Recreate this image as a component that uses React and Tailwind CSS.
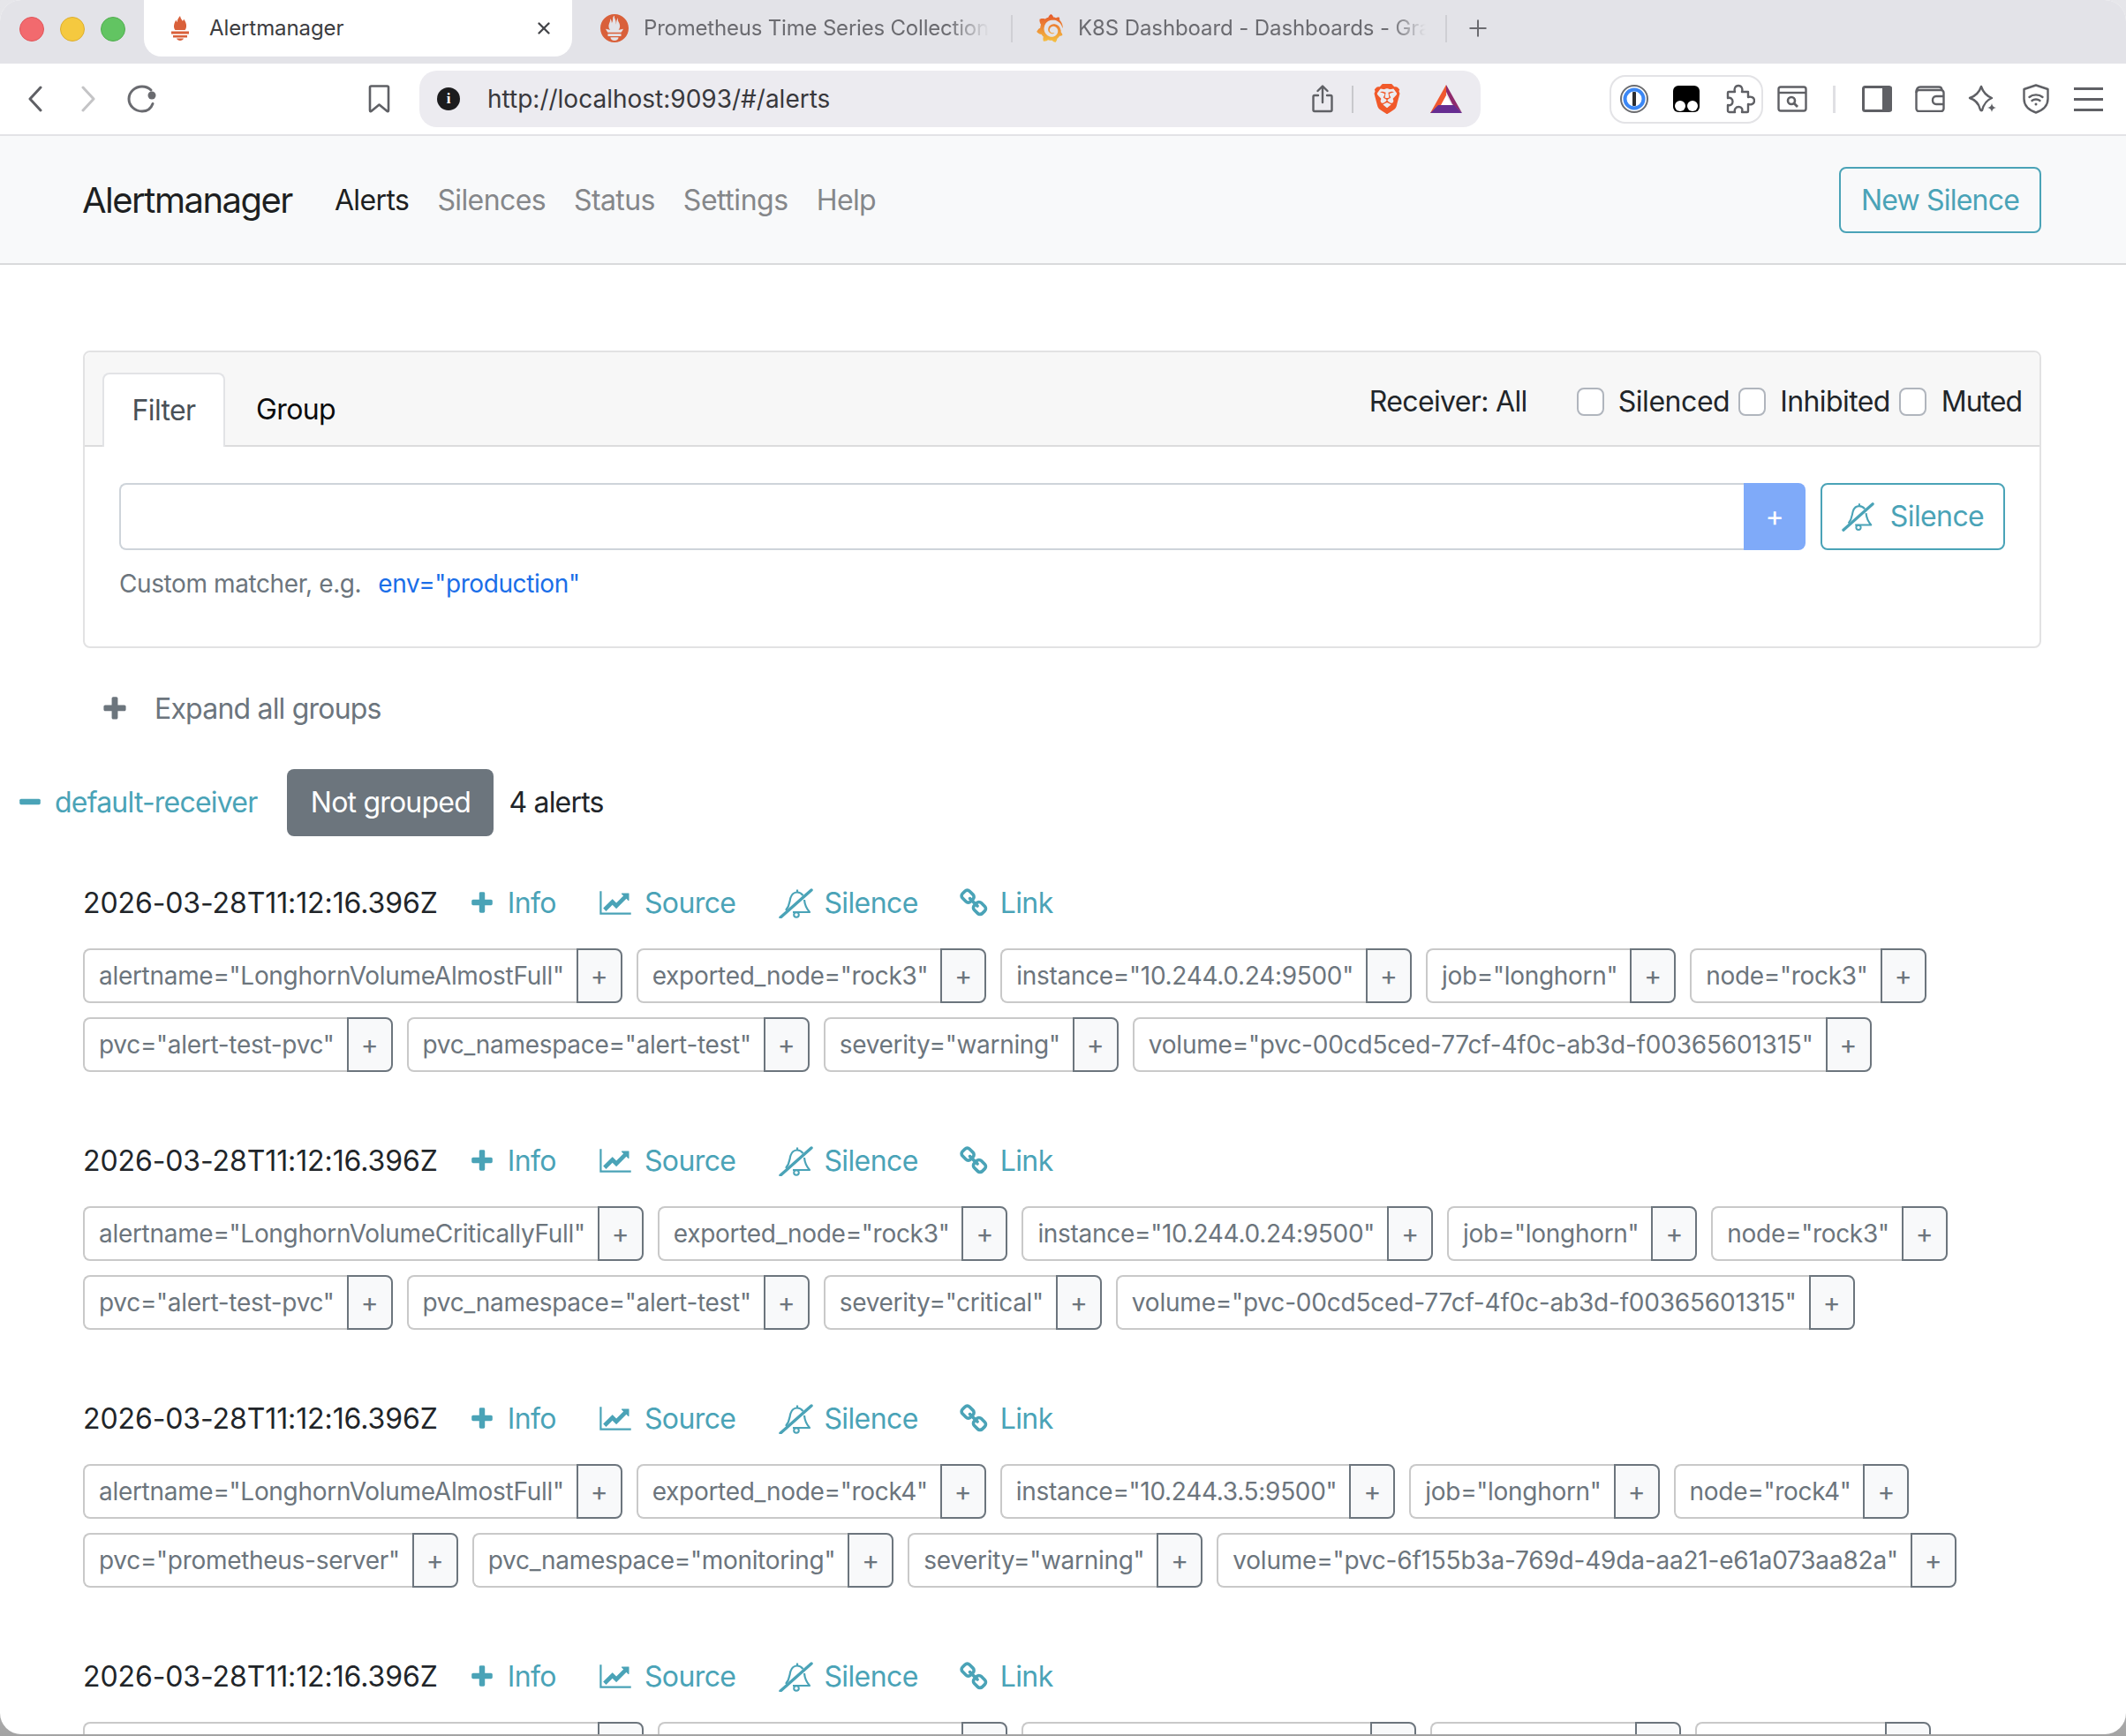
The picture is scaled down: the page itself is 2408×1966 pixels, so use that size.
import React from 'react';
import { SiBrave, SiGrafana, SiPrometheus } from 'react-icons/si';
import { X, Plus } from 'lucide-react';

const sans = { fontFamily: 'Inter, sans-serif' };

const PLUS = 'M1600 736v192q0 40-28 68t-68 28h-416v416q0 40-28 68t-68 28h-192q-40 0-68-28t-28-68v-416h-416q-40 0-68-28t-28-68v-192q0-40 28-68t68-28h416v-416q0-40 28-68t68-28h192q40 0 68 28t28 68v416h416q40 0 68 28t28 68z';
const MINUS = 'M1600 736v192q0 40-28 68t-68 28h-1216q-40 0-68-28t-28-68v-192q0-40 28-68t68-28h1216q40 0 68 28t28 68z';
const CHART = 'M2048 1536v128h-2048v-1536h128v1408h1920zm-128-1248v435q0 21-19.5 29.5t-35.5-7.5l-121-121-633 633q-10 10-23 10t-23-10l-233-233-416 416-192-192 585-585q10-10 23-10t23 10l233 233 464-464-121-121q-16-16-7.5-35.5t29.5-19.5h435q14 0 23 9t9 23z';
const LINK = 'M1456 1216q0-40-28-68l-208-208q-28-28-68-28-42 0-72 32 3 3 19 18.500t21.500 21.500 15 19 13 25.500 3.500 27.500q0 40-28 68t-68 28q-15 0-27.500-3.500t-25.500-13-19-15-21.500-21.500-18.500-19q-33 31-33 73 0 40 28 68l206 207q27 27 68 27 40 0 68-26l147-146q28-28 28-67zm-703-705q0-40-28-68l-206-207q-28-28-68-28-39 0-68 27l-147 146q-28 28-28 67 0 40 28 68l208 208q27 27 68 27 42 0 72-31-3-3-19-18.500t-21.500-21.500-15-19-13-25.500-3.500-27.500q0-40 28-68t68-28q15 0 27.500 3.500t25.500 13 19 15 21.500 21.500 18.500 19q33-31 33-73zm895 705q0 120-85 203l-147 146q-83 83-203 83-121 0-204-85l-206-207q-83-83-83-203 0-123 88-209l-88-88q-86 88-208 88-120 0-204-84l-208-208q-84-84-84-204t85-203l147-146q83-83 203-83 121 0 204 85l206 207q83 83 83 203 0 123-88 209l88 88q86-88 208-88 120 0 204 84l208 208q84 84 84 204z';

function Fa({ d, className, box = '0 0 1792 1792' }) {
  return (
    <svg viewBox={box} className={className} fill="currentColor">
      <path d={d} />
    </svg>
  );
}

function BellSlash({ className }) {
  return (
    <svg viewBox="0 0 40 34" className={className} fill="none" stroke="currentColor">
      <path d="M8 25C13 19 12 15 13.500 10.500C15 6 18 4.500 21 4.500C24 4.500 26 6 27.500 8M29 13C29.500 19 31.500 23 35 27H16" strokeWidth="2.200" strokeLinejoin="round" />
      <path d="M21 1.500V4" strokeWidth="2.200" />
      <circle cx="20" cy="30" r="2.800" strokeWidth="2" />
      <path d="M2 33L37 2" strokeWidth="3.400" strokeLinecap="round" />
    </svg>
  );
}

function Flame({ className }) {
  return (
    <svg viewBox="0 0 20 28" className={className} fill="#d9603a">
      <path d="M10 0C10.500 3 12 4 13 6C13.500 5 14 4.500 14 3.500C16 6 17.500 9 17 12.500C16.800 14 16 15.500 15.500 16H4.500C3.500 15 3 13.500 3 12C3 9 4 7 5.500 4.500C5.800 5.500 6 6.500 6.800 7C6.500 4 8.500 2 10 0Z" />
      <rect x="0" y="17.500" width="20" height="3" />
      <rect x="2" y="22" width="16" height="2.500" />
      <path d="M6 25.500H14C13.500 27 12 28 10 28C8 28 6.500 27 6 25.500Z" />
    </svg>
  );
}

function Chevron({ className, color, flip }) {
  return (
    <svg viewBox="0 0 16 30" className={className} fill="none">
      <path d={flip ? 'M2 2L14 15L2 28' : 'M14 2L2 15L14 28'} stroke={color} strokeWidth="3" strokeLinecap="round" strokeLinejoin="round" />
    </svg>
  );
}

function BookmarkIcon({ className }) {
  return (
    <svg viewBox="0 0 25 32" className={className} fill="none">
      <path d="M2 3C2 2 2.500 1.500 3.500 1.500H21.500C22.500 1.500 23 2 23 3V29C23 30.500 22 30.500 21 29.500L12.500 22.500L4 29.500C3 30.500 2 30.500 2 29V3Z" stroke="#5f6065" strokeWidth="2.600" strokeLinejoin="round" />
    </svg>
  );
}

function Reload({ className }) {
  return (
    <svg viewBox="0 0 34 32" className={className} fill="none">
      <path d="M30 21.500C28 27 23.500 30 18 30C10 30 3 24 3 16C3 8 10 2 18 2C22 2 25.500 3.500 28 6" stroke="#6a6b70" strokeWidth="3" strokeLinecap="round" />
      <circle cx="29" cy="12" r="4.500" fill="#6a6b70" />
    </svg>
  );
}

function Share({ className }) {
  return (
    <svg viewBox="0 0 24 32" className={className} fill="none" stroke="#5f6065" strokeWidth="2.400" strokeLinecap="round" strokeLinejoin="round">
      <path d="M7 12H3C2 12 1.500 12.500 1.500 13.500V28.500C1.500 29.500 2 30 3 30H21C22 30 22.500 29.500 22.500 28.500V13.500C22.500 12.500 22 12 21 12H17" />
      <path d="M12 20V2M6.500 7L12 1.500L17.500 7" />
    </svg>
  );
}

function Triangle({ className }) {
  return (
    <svg viewBox="0 0 36 32" className={className}>
      <path d="M18 0L0 32H12L18 21V0Z" fill="#f0582f" />
      <path d="M18 0L36 32L25 22L18 8V0Z" fill="#8f2a6c" />
      <path d="M0 32L9 23H27L36 32H0Z" fill="#662d91" />
      <path d="M18 12L24 23H12L18 12Z" fill="#fff" />
    </svg>
  );
}

function OnePassword({ className }) {
  return (
    <svg viewBox="0 0 32 32" className={className}>
      <circle cx="16" cy="16" r="15" fill="#fff" stroke="#6b6c70" strokeWidth="2" />
      <circle cx="16" cy="16" r="10.500" fill="#fff" stroke="#3b87f5" strokeWidth="4" />
      <rect x="14" y="8" width="4" height="16" rx="1" fill="#2c2c2e" />
    </svg>
  );
}

function Tamper({ className }) {
  return (
    <svg viewBox="0 0 30 30" className={className}>
      <rect width="30" height="30" rx="6" fill="#000" />
      <circle cx="8" cy="23" r="6" fill="#fff" />
      <circle cx="22" cy="23" r="6" fill="#fff" />
    </svg>
  );
}

function Puzzle({ className }) {
  return (
    <svg viewBox="0 0 34 34" className={className} fill="none" stroke="#5f6065" strokeWidth="2.400" strokeLinejoin="round">
      <path d="M4 9H11C10 6 11 2 15 2C19 2 20 6 19 9H26V15C29 14 33 15 33 19C33 23 29 24 26 23V31C26 32 25.500 32 25 32H19C20 29 19 26 15.500 26C12 26 10 29 11 32H5C4 32 3 31.500 3 30.500V24C6 25 8.500 23 8.500 20C8.500 17 6 15 3 16V10C3 9.500 3.500 9 4 9Z" />
    </svg>
  );
}

function Reader({ className }) {
  return (
    <svg viewBox="0 0 34 30" className={className} fill="none" stroke="#5f6065" strokeWidth="2.400">
      <rect x="1.500" y="1.500" width="31" height="27" rx="2.500" />
      <path d="M1.500 8H32.500" />
      <circle cx="16" cy="17" r="4" strokeWidth="2.600" />
      <path d="M19 20L23 24" strokeWidth="2.800" />
    </svg>
  );
}

function Sidebar({ className }) {
  return (
    <svg viewBox="0 0 34 30" className={className}>
      <rect x="1.500" y="1.500" width="31" height="27" rx="2" fill="#fff" stroke="#5f6065" strokeWidth="3" />
      <rect x="23" y="1" width="10.500" height="28" fill="#5f6065" />
    </svg>
  );
}

function Wallet({ className }) {
  return (
    <svg viewBox="0 0 34 30" className={className} fill="none" stroke="#5f6065" strokeWidth="2.400" strokeLinejoin="round">
      <rect x="1.500" y="5" width="31" height="24" rx="3" />
      <path d="M1.500 8C1.500 4 3 1.500 6 1.500H27C29.500 1.500 30.500 3 30.500 5.500" />
      <path d="M33 12H24C21.500 12 20 14 20 16.500C20 19 21.500 21 24 21H33" />
    </svg>
  );
}

function Sparkle({ className }) {
  return (
    <svg viewBox="0 0 34 32" className={className} fill="none" stroke="#5f6065" strokeWidth="2.400" strokeLinejoin="round">
      <path d="M15 2C17 8 22 13 27 15C22 17 18 21 16 29C15 29.500 14 29 13.500 27C12 21 8 17 2 15C8 13 13 8 15 2Z" />
      <path d="M27 21C27.500 24 29 25.500 32 26C29 26.500 27.500 28 27 31C26.500 28 25 26.500 22 26C25 25.500 26.500 24 27 21Z" fill="#5f6065" stroke="none" />
    </svg>
  );
}

function ShieldWifi({ className }) {
  return (
    <svg viewBox="0 0 30 34" className={className} fill="none" stroke="#5f6065" strokeWidth="2.400" strokeLinejoin="round">
      <path d="M15 1.500L28.500 6V17C28.500 25 22 30 15 32.500C8 30 1.500 25 1.500 17V6L15 1.500Z" />
      <path d="M7.500 15C11.500 11.500 18.500 11.500 22.500 15M10.500 19C13 17 17 17 19.500 19" strokeLinecap="round" />
      <circle cx="15" cy="23" r="1.500" fill="#5f6065" stroke="none" />
    </svg>
  );
}

function TabBar() {
  return (
    <div className="flex h-[72px] items-center bg-[#e3e3e8] pl-[22px]" style={sans}>
      <div className="mt-[-6px] flex gap-[18px]">
        <span className="h-[28px] w-[28px] rounded-full border border-[#e0565a] bg-[#f26a6e]" />
        <span className="h-[28px] w-[28px] rounded-full border border-[#dcae30] bg-[#f5c93f]" />
        <span className="h-[28px] w-[28px] rounded-full border border-[#52ae50] bg-[#62c462]" />
      </div>
      <div className="ml-[21px] flex h-[64px] w-[485px] items-center self-start rounded-b-[20px] bg-white pl-[31px]">
        <Flame className="h-[28px] w-[20px]" />
        <span className="ml-[23px] text-[24px] tracking-[-0.1px] text-[#3c3c40]">Alertmanager</span>
        <X className="ml-[216px] h-[22px] w-[22px] text-[#45464a]" strokeWidth={2.6} />
      </div>
      <div className="ml-[32px] mt-[-8px] flex items-center">
        <SiPrometheus className="h-[32px] w-[32px] text-[#d9603a]" />
        <span className="ml-[17px] w-[392px] overflow-hidden whitespace-nowrap text-[24px] tracking-[-0.2px] text-[#6b6b70] [mask-image:linear-gradient(to_right,black_88%,transparent)]">Prometheus Time Series Collection and Processing</span>
        <span className="ml-[24px] h-[31px] w-[2px] bg-[#cfcfd4]" />
        <SiGrafana className="ml-[26px] h-[32px] w-[32px]" fill="url(#grafana)" />
        <span className="ml-[16px] w-[394px] overflow-hidden whitespace-nowrap text-[24px] tracking-[-0.1px] text-[#6b6b70] [mask-image:linear-gradient(to_right,black_90%,transparent)]">K8S Dashboard - Dashboards - Grafana</span>
        <span className="ml-[22px] h-[31px] w-[2px] bg-[#cfcfd4]" />
        <Plus className="ml-[20px] h-[30px] w-[30px] text-[#6b6b70]" strokeWidth={1.6} />
      </div>
      <svg className="h-0 w-0">
        <defs>
          <linearGradient id="grafana" x1="0" y1="1" x2="0" y2="0">
            <stop offset="0" stopColor="#f5c242" />
            <stop offset="1" stopColor="#e5582b" />
          </linearGradient>
        </defs>
      </svg>
    </div>
  );
}

function Toolbar() {
  return (
    <div className="flex h-[82px] items-center rounded-t-[14px] border-b-2 border-[#e3e3e6] bg-white pl-[32px]" style={sans}>
      <Chevron className="h-[30px] w-[16px]" color="#5f6065" />
      <Chevron className="ml-[44px] h-[30px] w-[16px]" color="#c4c4c6" flip />
      <Reload className="ml-[35px] h-[32px] w-[34px]" />
      <BookmarkIcon className="ml-[240px] h-[32px] w-[25px]" />
      <div className="ml-[33px] flex h-[64px] w-[1202px] items-center rounded-[20px] bg-[#ecebf0] pl-[20px]">
        <span className="flex h-[26px] w-[26px] items-center justify-center rounded-full bg-[#1c1c1e] text-[17px] font-bold text-white" style={{ fontFamily: '"Liberation Serif", serif' }}>i</span>
        <span className="ml-[31px] text-[28px] text-[#38383c]">http://localhost:9093/#/alerts</span>
        <Share className="ml-[546px] h-[32px] w-[24px]" />
        <span className="ml-[21px] h-[31px] w-[2px] bg-[#c8c8cc]" />
        <SiBrave className="ml-[21px] h-[36px] w-[34px] text-[#f1592a]" />
        <Triangle className="ml-[32px] h-[32px] w-[36px]" />
      </div>
      <div className="ml-[146px] flex h-[55px] w-[174px] items-center rounded-[18px] border-2 border-[#e3e3e6] pl-[10px]">
        <OnePassword className="h-[32px] w-[32px]" />
        <Tamper className="ml-[28px] h-[30px] w-[30px]" />
        <Puzzle className="ml-[29px] h-[34px] w-[34px]" />
      </div>
      <Reader className="ml-[16px] h-[30px] w-[34px]" />
      <span className="ml-[29px] h-[31px] w-[3px] bg-[#e0e0e4]" />
      <Sidebar className="ml-[30px] h-[30px] w-[34px]" />
      <Wallet className="ml-[26px] h-[30px] w-[34px]" />
      <Sparkle className="ml-[26px] h-[32px] w-[34px]" />
      <ShieldWifi className="ml-[28px] h-[34px] w-[30px]" />
      <div className="ml-[28px] flex h-[27px] w-[33px] flex-col justify-between">
        <span className="h-[3px] bg-[#5f6065]" />
        <span className="h-[3px] bg-[#5f6065]" />
        <span className="h-[3px] bg-[#5f6065]" />
      </div>
    </div>
  );
}

function Navbar() {
  return (
    <div className="flex h-[146px] items-center justify-between border-b-2 border-[#d9dadc] bg-[#f8f9fa] pl-[94px] pr-[96px]">
      <div className="flex items-center pt-[2px]">
        <span className="-ml-[1px] text-[40px] tracking-[-1.5px] text-[#1d1f21]">Alertmanager</span>
        <div className="ml-[48px] flex gap-[32px] text-[32px] tracking-[-0.6px] text-[#85878a]">
          <span className="text-[#1d1f21]">Alerts</span>
          <span>Silences</span>
          <span>Status</span>
          <span className="tracking-[-0.45px]">Settings</span>
          <span>Help</span>
        </div>
      </div>
      <button className="h-[75px] w-[229px] rounded-[8px] border-2 border-[#4aa3b7] pt-[2px] text-[32px] tracking-[-0.8px] text-[#4aa3b7]">New Silence</button>
    </div>
  );
}

function FilterCard() {
  return (
    <div className="rounded-[8px] border-2 border-[#e2e2e3]">
      <div className="flex h-[107px] items-end justify-between rounded-t-[8px] border-b-2 border-[#dcdcdd] bg-[#f7f7f7] pl-[20px] pr-[20px]">
        <div className="flex items-end text-[32px] tracking-[-0.6px]">
          <div className="-mb-[2px] flex h-[84px] w-[139px] items-center justify-center rounded-t-[8px] border-2 border-b-0 border-[#e2e3e6] bg-white text-[#495057]">Filter</div>
          <div className="flex h-[82px] items-center pl-[35px] pt-[2px] text-[#0b0b0c]">Group</div>
        </div>
        <div className="mb-[25px] flex items-center text-[32px] tracking-[-0.6px] text-[#212529]">
          <span className="tracking-[-0.65px]">Receiver: All</span>
          <span className="ml-[56px] h-[32px] w-[31px] rounded-[8px] border-2 border-[#b0b5bd] bg-white" />
          <span className="ml-[16px] tracking-[-0.45px]">Silenced</span>
          <span className="ml-[10px] h-[32px] w-[31px] rounded-[8px] border-2 border-[#b0b5bd] bg-white" />
          <span className="ml-[16px]">Inhibited</span>
          <span className="ml-[10px] h-[32px] w-[31px] rounded-[8px] border-2 border-[#b0b5bd] bg-white" />
          <span className="ml-[17px] tracking-[-1px]">Muted</span>
        </div>
      </div>
      <div className="px-[39px] pb-[51px] pt-[41px]">
        <div className="flex">
          <div className="h-[76px] flex-1 rounded-l-[8px] border-2 border-r-0 border-[#ced4da] bg-white" />
          <div className="flex h-[76px] w-[70px] items-center justify-center rounded-r-[8px] bg-[#7faaf9] text-[32px] text-white">+</div>
          <button className="ml-[17px] flex h-[76px] w-[209px] items-center justify-center gap-[17px] rounded-[8px] border-2 border-[#4aa3b7] text-[32px] tracking-[-0.6px] text-[#4aa3b7]">
            <BellSlash className="h-[34px] w-[38px]" />
            Silence
          </button>
        </div>
        <div className="mt-[18px] flex text-[28px] leading-[40px] tracking-[-0.4px] text-[#6c757d]">
          <span>Custom matcher, e.g.</span>
          <span className="ml-[19px] text-[#1a6ee8]">env="production"</span>
        </div>
      </div>
    </div>
  );
}

function Chip({ text }) {
  return (
    <div className="flex h-[62px] text-[28px] text-[#6c757d]">
      <div className={text.startsWith('volume') ? 'flex items-center rounded-l-[8px] border-2 border-r-0 border-[#c9c9c9] pl-[16px] pr-[14px] tracking-[-0.2px]' : 'flex items-center rounded-l-[8px] border-2 border-r-0 border-[#c9c9c9] pl-[16px] pr-[14px] tracking-[-0.3px]'}>{text}</div>
      <div className="flex w-[52px] items-center justify-center rounded-r-[8px] border-2 border-[#6c757d] bg-[#f8f9fa] text-[30px]">+</div>
    </div>
  );
}

function Alert({ labels }) {
  return (
    <div className="mb-[75px]">
      <div className="flex h-[51px] items-center text-[32px] tracking-[-0.6px]">
        <span className="tracking-[-0.1px] text-[#212529]">2026-03-28T11:12:16.396Z</span>
        <div className="flex items-center text-[#4aa3b7]">
          <Fa d={PLUS} className="ml-[35px] h-[30px] w-[30px]" />
          <span className="ml-[14px]">Info</span>
          <Fa d={CHART} box="0 0 2048 1792" className="ml-[49px] h-[31px] w-[36px]" />
          <span className="ml-[15px]">Source</span>
          <BellSlash className="ml-[49px] h-[34px] w-[40px]" />
          <span className="ml-[11px]">Silence</span>
          <Fa d={LINK} className="ml-[47px] h-[34px] w-[34px]" />
          <span className="ml-[12px]">Link</span>
        </div>
      </div>
      <div className="mt-[26px] flex flex-wrap gap-x-[16px] gap-y-[16px]">
        {labels.map((l) => (
          <Chip key={l} text={l} />
        ))}
      </div>
    </div>
  );
}

const alerts = [
  ['LonghornVolumeAlmostFull', 'rock3', '10.244.0.24:9500', 'alert-test-pvc', 'alert-test', 'warning', 'pvc-00cd5ced-77cf-4f0c-ab3d-f00365601315'],
  ['LonghornVolumeCriticallyFull', 'rock3', '10.244.0.24:9500', 'alert-test-pvc', 'alert-test', 'critical', 'pvc-00cd5ced-77cf-4f0c-ab3d-f00365601315'],
  ['LonghornVolumeAlmostFull', 'rock4', '10.244.3.5:9500', 'prometheus-server', 'monitoring', 'warning', 'pvc-6f155b3a-769d-49da-aa21-e61a073aa82a'],
  ['LonghornVolumeCriticallyFull', 'rock4', '10.244.3.5:9500', 'prometheus-server', 'monitoring', 'critical', 'pvc-6f155b3a-769d-49da-aa21-e61a073aa82a'],
];

function labelsOf([name, node, inst, pvc, ns, sev, vol]) {
  return [
    `alertname="${name}"`,
    `exported_node="${node}"`,
    `instance="${inst}"`,
    'job="longhorn"',
    `node="${node}"`,
    `pvc="${pvc}"`,
    `pvc_namespace="${ns}"`,
    `severity="${sev}"`,
    `volume="${vol}"`,
  ];
}

export default function App() {
  return (
    <div className="h-[1966px] w-[2408px] overflow-hidden bg-gradient-to-b from-[#e6e6ea] from-90% to-[#a3a3a3]">
      <div className="h-[1964px] overflow-hidden rounded-[24px] bg-white" style={sans}>
        <TabBar />
        <Toolbar />
        <Navbar />
        <div className="pl-[94px] pr-[96px] pt-[97px]">
          <FilterCard />
          <div className="mt-[53px] flex h-[32px] items-center text-[32px] tracking-[-0.8px] text-[#6c757d]">
            <Fa d={PLUS} className="ml-[20px] h-[32px] w-[32px]" />
            <span className="ml-[29px]">Expand all groups</span>
          </div>
          <div className="-ml-[75px] mt-[52px] flex h-[76px] items-center text-[32px] tracking-[-0.8px]">
            <Fa d={MINUS} className="h-[30px] w-[30px] text-[#4aa3b7]" />
            <span className="ml-[13px] text-[#4aa3b7]">default-receiver</span>
            <span className="ml-[34px] flex h-[76px] w-[234px] items-center justify-center rounded-[8px] bg-[#6c757d] text-white">Not grouped</span>
            <span className="ml-[17px] text-[#212529]">4 alerts</span>
          </div>
          <div className="mt-[50px]">
            {alerts.map((a, i) => (
              <Alert key={i} labels={labelsOf(a)} />
            ))}
          </div>
        </div>
      </div>
    </div>
  );
}
